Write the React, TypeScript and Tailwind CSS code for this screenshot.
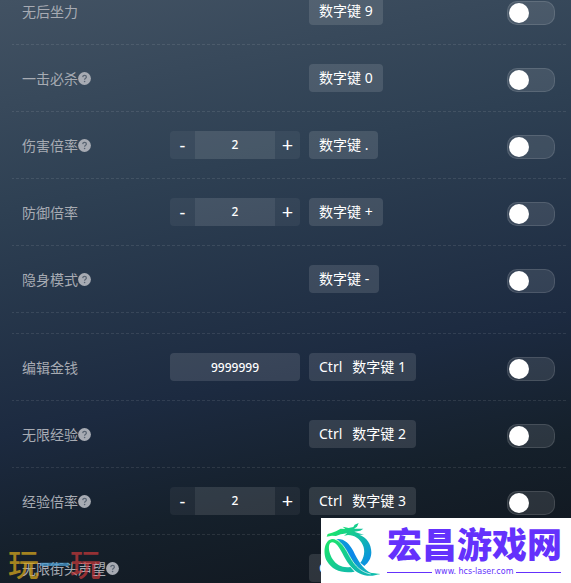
import { useState } from "react";

type Control = { kind: "stepper"; value: number } | { kind: "amount"; value: string };

interface Feature {
  name: string;
  keys: string[];
  help?: boolean;
  control?: Control;
}

const combat: Feature[] = [
  { name: "无后坐力", keys: ["数字键 9"] },
  { name: "一击必杀", keys: ["数字键 0"], help: true },
  { name: "伤害倍率", keys: ["数字键 ."], help: true, control: { kind: "stepper", value: 2 } },
  { name: "防御倍率", keys: ["数字键 +"], control: { kind: "stepper", value: 2 } },
  { name: "隐身模式", keys: ["数字键 -"], help: true },
];

const progress: Feature[] = [
  { name: "编辑金钱", keys: ["Ctrl", "数字键 1"], control: { kind: "amount", value: "9999999" } },
  { name: "无限经验", keys: ["Ctrl", "数字键 2"], help: true },
  { name: "经验倍率", keys: ["Ctrl", "数字键 3"], help: true, control: { kind: "stepper", value: 2 } },
  { name: "无限街头声望", keys: ["Ctrl", "数字键 4"], help: true },
];

function HelpIcon() {
  return (
    <svg viewBox="0 0 13 13" className="mb-px size-[13px] shrink-0" role="img" aria-label="说明">
      <circle cx="6.5" cy="6.5" r="6.4" fill="#a7abb3" />
      <path
        d="M4.7 5.1C4.8 4 5.5 3.4 6.6 3.4c1.1 0 1.8.6 1.8 1.5 0 1.3-1.8 1.4-1.8 2.8"
        fill="none"
        stroke="#596472"
        strokeWidth="1.2"
      />
      <circle cx="6.6" cy="9.5" r="0.8" fill="#596472" />
    </svg>
  );
}

function Stepper({ name, initial }: { name: string; initial: number }) {
  const [value, setValue] = useState(String(initial));
  const step = (by: number) => setValue(String(Number(value) + by));
  return (
    <div className="flex h-7 w-full overflow-hidden rounded-sm bg-white/5">
      <button type="button" aria-label={`${name} 减`} onClick={() => step(-1)} className="w-[25px] text-lg leading-7">
        -
      </button>
      <input
        aria-label={name}
        value={value}
        onChange={(e) => setValue(e.target.value)}
        className="min-w-0 flex-1 bg-white/7 text-center text-xs font-medium outline-none"
      />
      <button type="button" aria-label={`${name} 加`} onClick={() => step(1)} className="w-[25px] text-xl leading-7">
        +
      </button>
    </div>
  );
}

function Amount({ name, initial }: { name: string; initial: string }) {
  const [value, setValue] = useState(initial);
  return (
    <input
      aria-label={name}
      value={value}
      onChange={(e) => setValue(e.target.value)}
      className="h-7 w-full rounded-sm bg-white/12 text-center text-xs font-medium outline-none"
    />
  );
}

function FeatureRow({ feature }: { feature: Feature }) {
  const { name, keys, help, control } = feature;
  return (
    <li className="flex h-[67px] items-center border-b border-transparent pr-[11px] pl-[10px] [border-image:repeating-linear-gradient(90deg,#ffffff18_0_3px,transparent_3px_5px)_1]">
      <div className="flex w-[148px] shrink-0 items-center pt-[2px] text-sm text-[#a7abb3]">
        <span className="whitespace-nowrap">{name}</span>
        {help && <HelpIcon />}
      </div>
      <div className="mr-[9px] w-[130px] shrink-0">
        {control?.kind === "stepper" && <Stepper name={name} initial={control.value} />}
        {control?.kind === "amount" && <Amount name={name} initial={control.value} />}
      </div>
      <button type="button" className="flex h-7 items-center gap-[10px] rounded-sm bg-white/12 px-[10px] text-sm whitespace-nowrap">
        {keys.map((key) => (
          <span key={key}>{key}</span>
        ))}
      </button>
      <input
        type="checkbox"
        role="switch"
        aria-label={name}
        className="mt-1 ml-auto h-6 w-12 shrink-0 appearance-none rounded-[10px] border border-white/12 bg-white/10 p-px before:block before:size-5 before:rounded-full before:bg-white checked:bg-sky-500 checked:before:translate-x-6"
      />
    </li>
  );
}

function DragonLogo() {
  return (
    <svg viewBox="9 12 180 195" className="h-[65px] w-[60px] shrink-0" aria-hidden="true">
      <defs>
        <linearGradient id="body" gradientUnits="userSpaceOnUse" x1="40" y1="50" x2="155" y2="150">
          <stop offset="0" stopColor="#1be56a" />
          <stop offset="0.5" stopColor="#12bfa4" />
          <stop offset="1" stopColor="#0a8bea" />
        </linearGradient>
        <linearGradient id="ring" gradientUnits="userSpaceOnUse" x1="25" y1="80" x2="110" y2="180">
          <stop offset="0" stopColor="#1be56a" />
          <stop offset="1" stopColor="#10b7b0" />
        </linearGradient>
        <linearGradient id="stem" gradientUnits="userSpaceOnUse" x1="60" y1="80" x2="180" y2="182">
          <stop offset="0" stopColor="#0d9fd5" />
          <stop offset="0.4" stopColor="#0b86ea" />
          <stop offset="1" stopColor="#14cfa0" />
        </linearGradient>
      </defs>
      <path
        d="M26 68L29 60L42 56L54 52L68 44L82 45L74 38L92 42L106 39L110 32L122 27L117 38L108 44L136 44L127 50L109 53L122 58L138 62L124 62C146 70 160 90 160 115C160 132 152 146 139 156L127 146C138 132 143 110 134 92C126 74 110 64 90 63L78 65L88 58L68 61L54 66L42 65Z"
        fill="url(#body)"
      />
      <path
        d="M42 75C18 79 14 118 27 142C43 169 72 179 110 173L97 159C76 163 56 154 44 136C34 120 29 99 36 88C41 83 50 84 58 94C73 114 82 140 99 158C116 178 140 188 164 185L187 180C158 183 136 169 119 148C102 125 92 102 75 88C63 79 54 75 42 75Z"
        fill="url(#ring)"
      />
      <path
        d="M56 75C78 73 94 88 106 111C118 136 132 162 156 176L187 180C155 185 130 172 112 150C94 126 82 94 56 75Z"
        fill="url(#stem)"
      />
      <path d="M50 75C78 86 88 118 104 142C119 164 136 176 158 180" fill="none" stroke="#fff" strokeWidth="2" />
    </svg>
  );
}

function SiteBanner() {
  return (
    <a
      href="#site"
      className="absolute right-0 bottom-0 flex h-[65px] w-[250px] items-start overflow-hidden bg-white text-[#6431fc]"
    >
      <DragonLogo />
      <div className="ml-[6px] flex w-[174px] flex-col pt-[5px]">
        <span className="text-center font-['Noto_Sans_CJK_SC',sans-serif] text-[35px] leading-10 font-black whitespace-nowrap">
          宏昌游戏网
        </span>
        <span className="flex items-center gap-[3px] pt-px font-['DejaVu_Sans',sans-serif] text-[8px] leading-4 font-medium whitespace-nowrap">
          <span className="h-px flex-1 bg-current" />
          www. hcs-laser.com
          <span className="h-px flex-1 bg-current" />
        </span>
      </div>
    </a>
  );
}

function Watermark() {
  return (
    <div
      aria-hidden="true"
      className="pointer-events-none absolute bottom-0 left-[8px] flex items-center font-['Noto_Sans_CJK_SC',sans-serif] text-[31px] leading-10 font-medium"
    >
      <span className="text-[#d4a51d]/75">玩</span>
      <span className="text-[#4a9bd0]/75">一</span>
      <span className="text-[#d03a3a]/70">玩</span>
    </div>
  );
}

export default function App() {
  return (
    <main className="relative h-screen overflow-hidden bg-[linear-gradient(168deg,#425263_0%,#2e4053_30%,#1c2a40_62%,#15202b_79%,#10151c_100%)] pr-[5px] pl-3 font-['Noto_Sans','Noto_Sans_CJK_SC',sans-serif] text-white">
      <ul className="-mt-[22px]">
        {combat.map((feature) => (
          <FeatureRow key={feature.name} feature={feature} />
        ))}
      </ul>
      <ul className="mt-5 border-t border-transparent [border-image:repeating-linear-gradient(90deg,#ffffff18_0_3px,transparent_3px_5px)_1]">
        {progress.map((feature) => (
          <FeatureRow key={feature.name} feature={feature} />
        ))}
      </ul>
      <Watermark />
      <SiteBanner />
    </main>
  );
}
